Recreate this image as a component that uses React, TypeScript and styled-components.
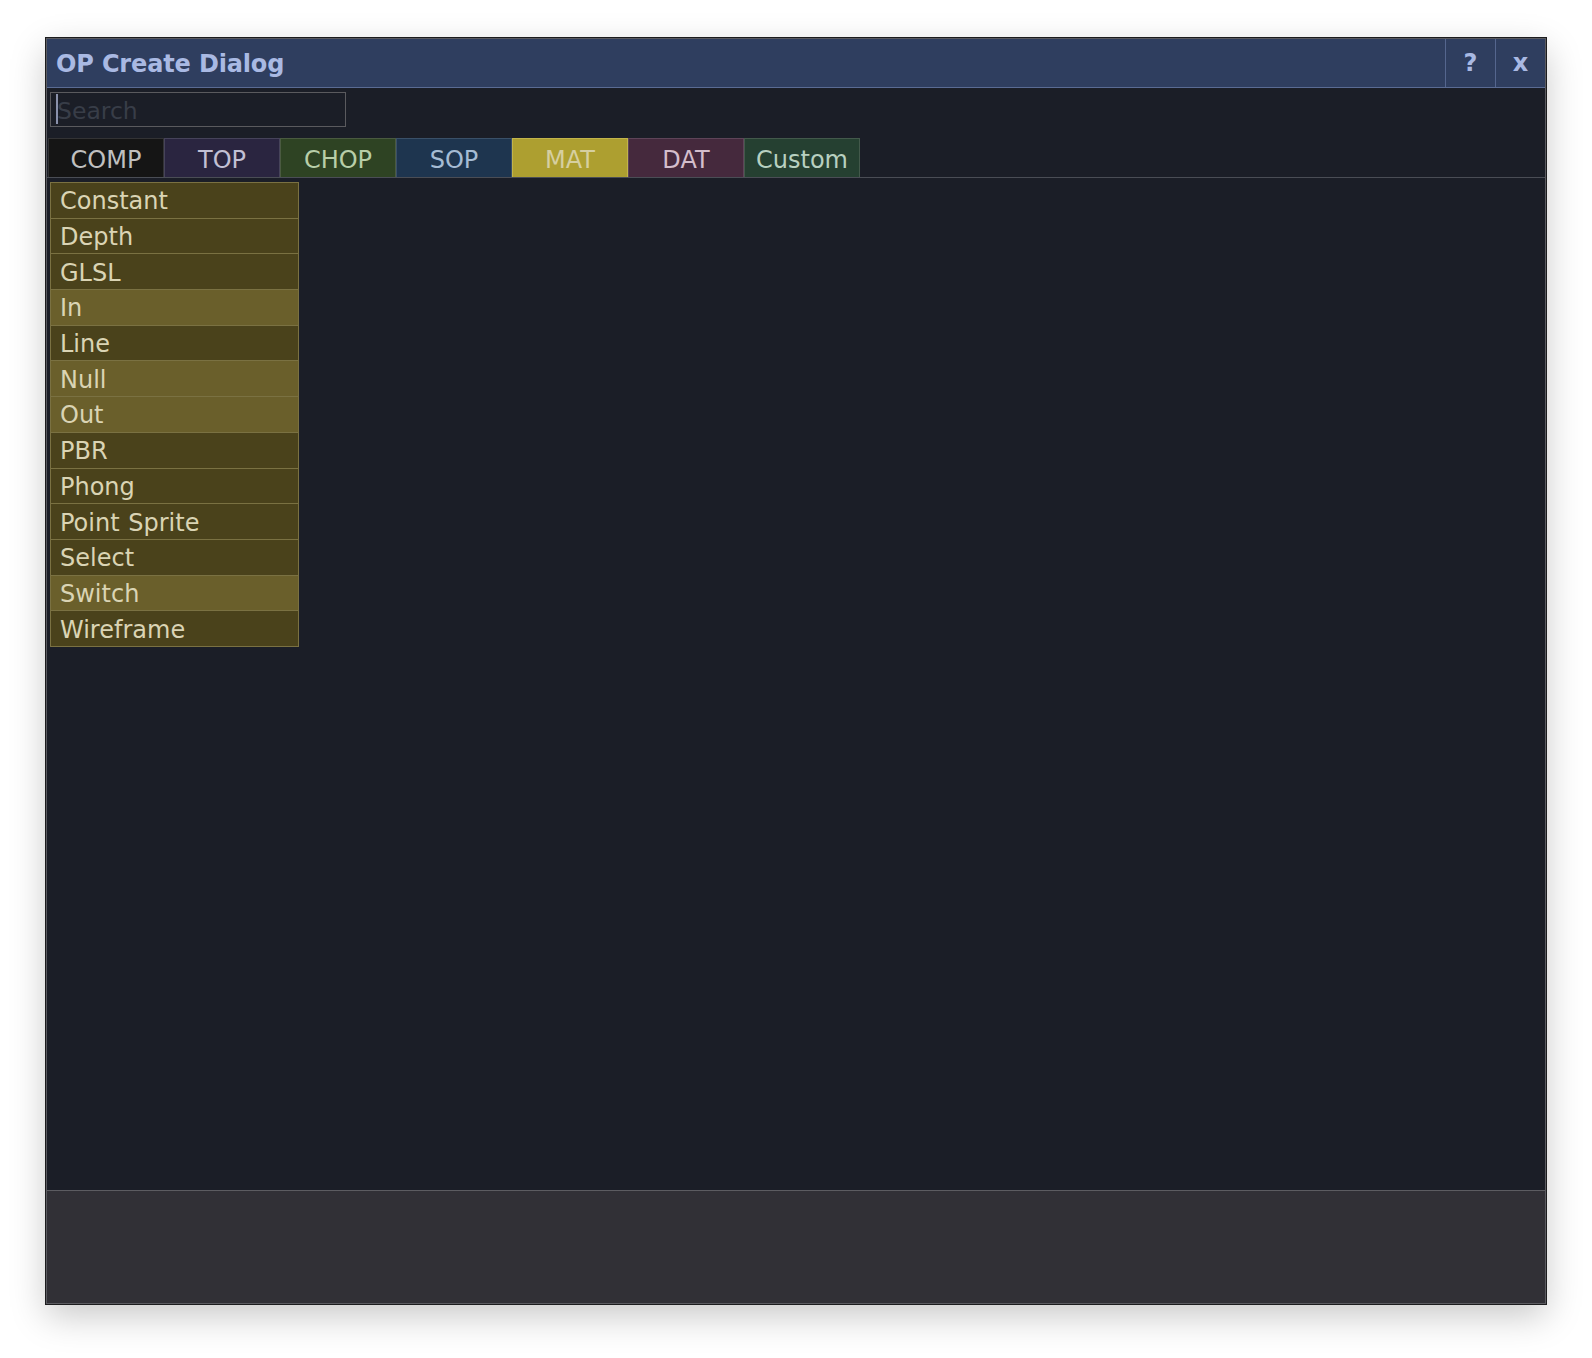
import React from "react";
import styled, { createGlobalStyle } from "styled-components";

const GlobalStyle = createGlobalStyle`
  html, body { margin: 0; padding: 0; background: #ffffff; }
  body { font-family: "DejaVu Sans", "Liberation Sans", sans-serif; }
  * { box-sizing: border-box; }
`;

const Page = styled.div`
  padding: 38px 0 0 46px;
  width: 1592px;
  height: 1358px;
`;

const Dialog = styled.div`
  width: 1500px;
  height: 1266px;
  border: 1px solid #5b5b60;
  box-shadow: 0 0 0 1px #1c1c1e, 0 12px 34px rgba(0, 0, 0, 0.22);
  display: flex;
  flex-direction: column;
  background: #1b1e27;
`;

const TitleBar = styled.div`
  height: 49px;
  flex: none;
  display: flex;
  align-items: stretch;
  background: #2f3e5f;
  border-bottom: 1px solid #5a6b93;
`;

const Title = styled.div`
  flex: 1;
  display: flex;
  align-items: center;
  padding: 2px 0 0 9px;
  font-size: 24px;
  font-weight: bold;
  color: #a9b9e3;
  letter-spacing: -0.15px;
`;

const TitleButton = styled.div`
  width: 50px;
  display: flex;
  align-items: center;
  justify-content: center;
  border-left: 1px solid #55668e;
  font-size: 24px;
  font-weight: bold;
  color: #a9b9e3;
  padding-bottom: 1px;
`;

const SearchRow = styled.div`
  flex: none;
  height: 50px;
  padding: 4px 0 11px 3px;
`;

const SearchWrap = styled.div`
  position: relative;
  width: 296px;
  height: 35px;
`;

const SearchInput = styled.input`
  width: 100%;
  height: 100%;
  margin: 0;
  border: 1px solid #5a5a5e;
  background: #1b1e27;
  padding: 2px 0 0 6px;
  font-family: "DejaVu Sans", "Liberation Sans", sans-serif;
  font-size: 23.5px;
  color: #c0c4d0;
  caret-color: transparent;
  outline: none;
  &::placeholder { color: #383d48; }
`;

const Caret = styled.span`
  position: absolute;
  left: 6px;
  top: 2px;
  width: 2px;
  height: 30px;
  background: #8a91ab;
`;

const TabBar = styled.div`
  flex: none;
  height: 40px;
  display: flex;
  padding-left: 1px;
  border-bottom: 1px solid #4a4d55;
`;

const Tab = styled.div<{ $bg: string; $fg: string; $bd: string }>`
  width: 116px;
  height: 39px;
  display: flex;
  align-items: center;
  justify-content: center;
  background: ${(p) => p.$bg};
  color: ${(p) => p.$fg};
  border: 1px solid ${(p) => p.$bd};
  border-bottom: none;
  font-size: 24px;
  padding-top: 3px;
`;

const Body = styled.div`
  flex: 1;
  padding: 4px 0 0 3px;
  background: #1b1e27;
`;

const List = styled.div`
  width: 249px;
  border: 1px solid #7a7142;
  border-bottom: none;
  display: flex;
  flex-direction: column;
`;

const Row = styled.div<{ $hi: boolean }>`
  height: 35.69px;
  display: flex;
  align-items: center;
  padding: 2px 0 0 9px;
  background: ${(p) => (p.$hi ? "#6a5f2b" : "#4a421b")};
  border-bottom: 1px solid #7a7142;
  color: #dad4b4;
  font-size: 24px;
  white-space: nowrap;
  word-spacing: 1px;
`;

const Footer = styled.div`
  flex: none;
  height: 113px;
  background: #313036;
  border-top: 1px solid #5c5c61;
`;

const tabs = [
  { label: "COMP", bg: "#151515", fg: "#c0c0c0", bd: "#333335" },
  { label: "TOP", bg: "#2a2540", fg: "#c2c0d4", bd: "#46435a" },
  { label: "CHOP", bg: "#2e4323", fg: "#b8cea8", bd: "#4a5a40" },
  { label: "SOP", bg: "#1e354f", fg: "#a6bcd4", bd: "#3a5068" },
  { label: "MAT", bg: "#ad9f30", fg: "#d6cfa0", bd: "#c2b44a" },
  { label: "DAT", bg: "#45293d", fg: "#d4becc", bd: "#5e4458" },
  { label: "Custom", bg: "#254031", fg: "#b8d0c0", bd: "#43594b" },
];

const items: { name: string; hi: boolean }[] = [
  { name: "Constant", hi: false },
  { name: "Depth", hi: false },
  { name: "GLSL", hi: false },
  { name: "In", hi: true },
  { name: "Line", hi: false },
  { name: "Null", hi: true },
  { name: "Out", hi: true },
  { name: "PBR", hi: false },
  { name: "Phong", hi: false },
  { name: "Point Sprite", hi: false },
  { name: "Select", hi: false },
  { name: "Switch", hi: true },
  { name: "Wireframe", hi: false },
];

export default function App() {
  return (
    <>
      <GlobalStyle />
      <Page>
        <Dialog>
          <TitleBar>
            <Title>OP Create Dialog</Title>
            <TitleButton>?</TitleButton>
            <TitleButton>x</TitleButton>
          </TitleBar>
          <SearchRow>
            <SearchWrap>
              <SearchInput placeholder="Search" />
              <Caret />
            </SearchWrap>
          </SearchRow>
          <TabBar>
            {tabs.map((t) => (
              <Tab key={t.label} $bg={t.bg} $fg={t.fg} $bd={t.bd}>
                {t.label}
              </Tab>
            ))}
          </TabBar>
          <Body>
            <List>
              {items.map((it) => (
                <Row key={it.name} $hi={it.hi}>
                  {it.name}
                </Row>
              ))}
            </List>
          </Body>
          <Footer />
        </Dialog>
      </Page>
    </>
  );
}
